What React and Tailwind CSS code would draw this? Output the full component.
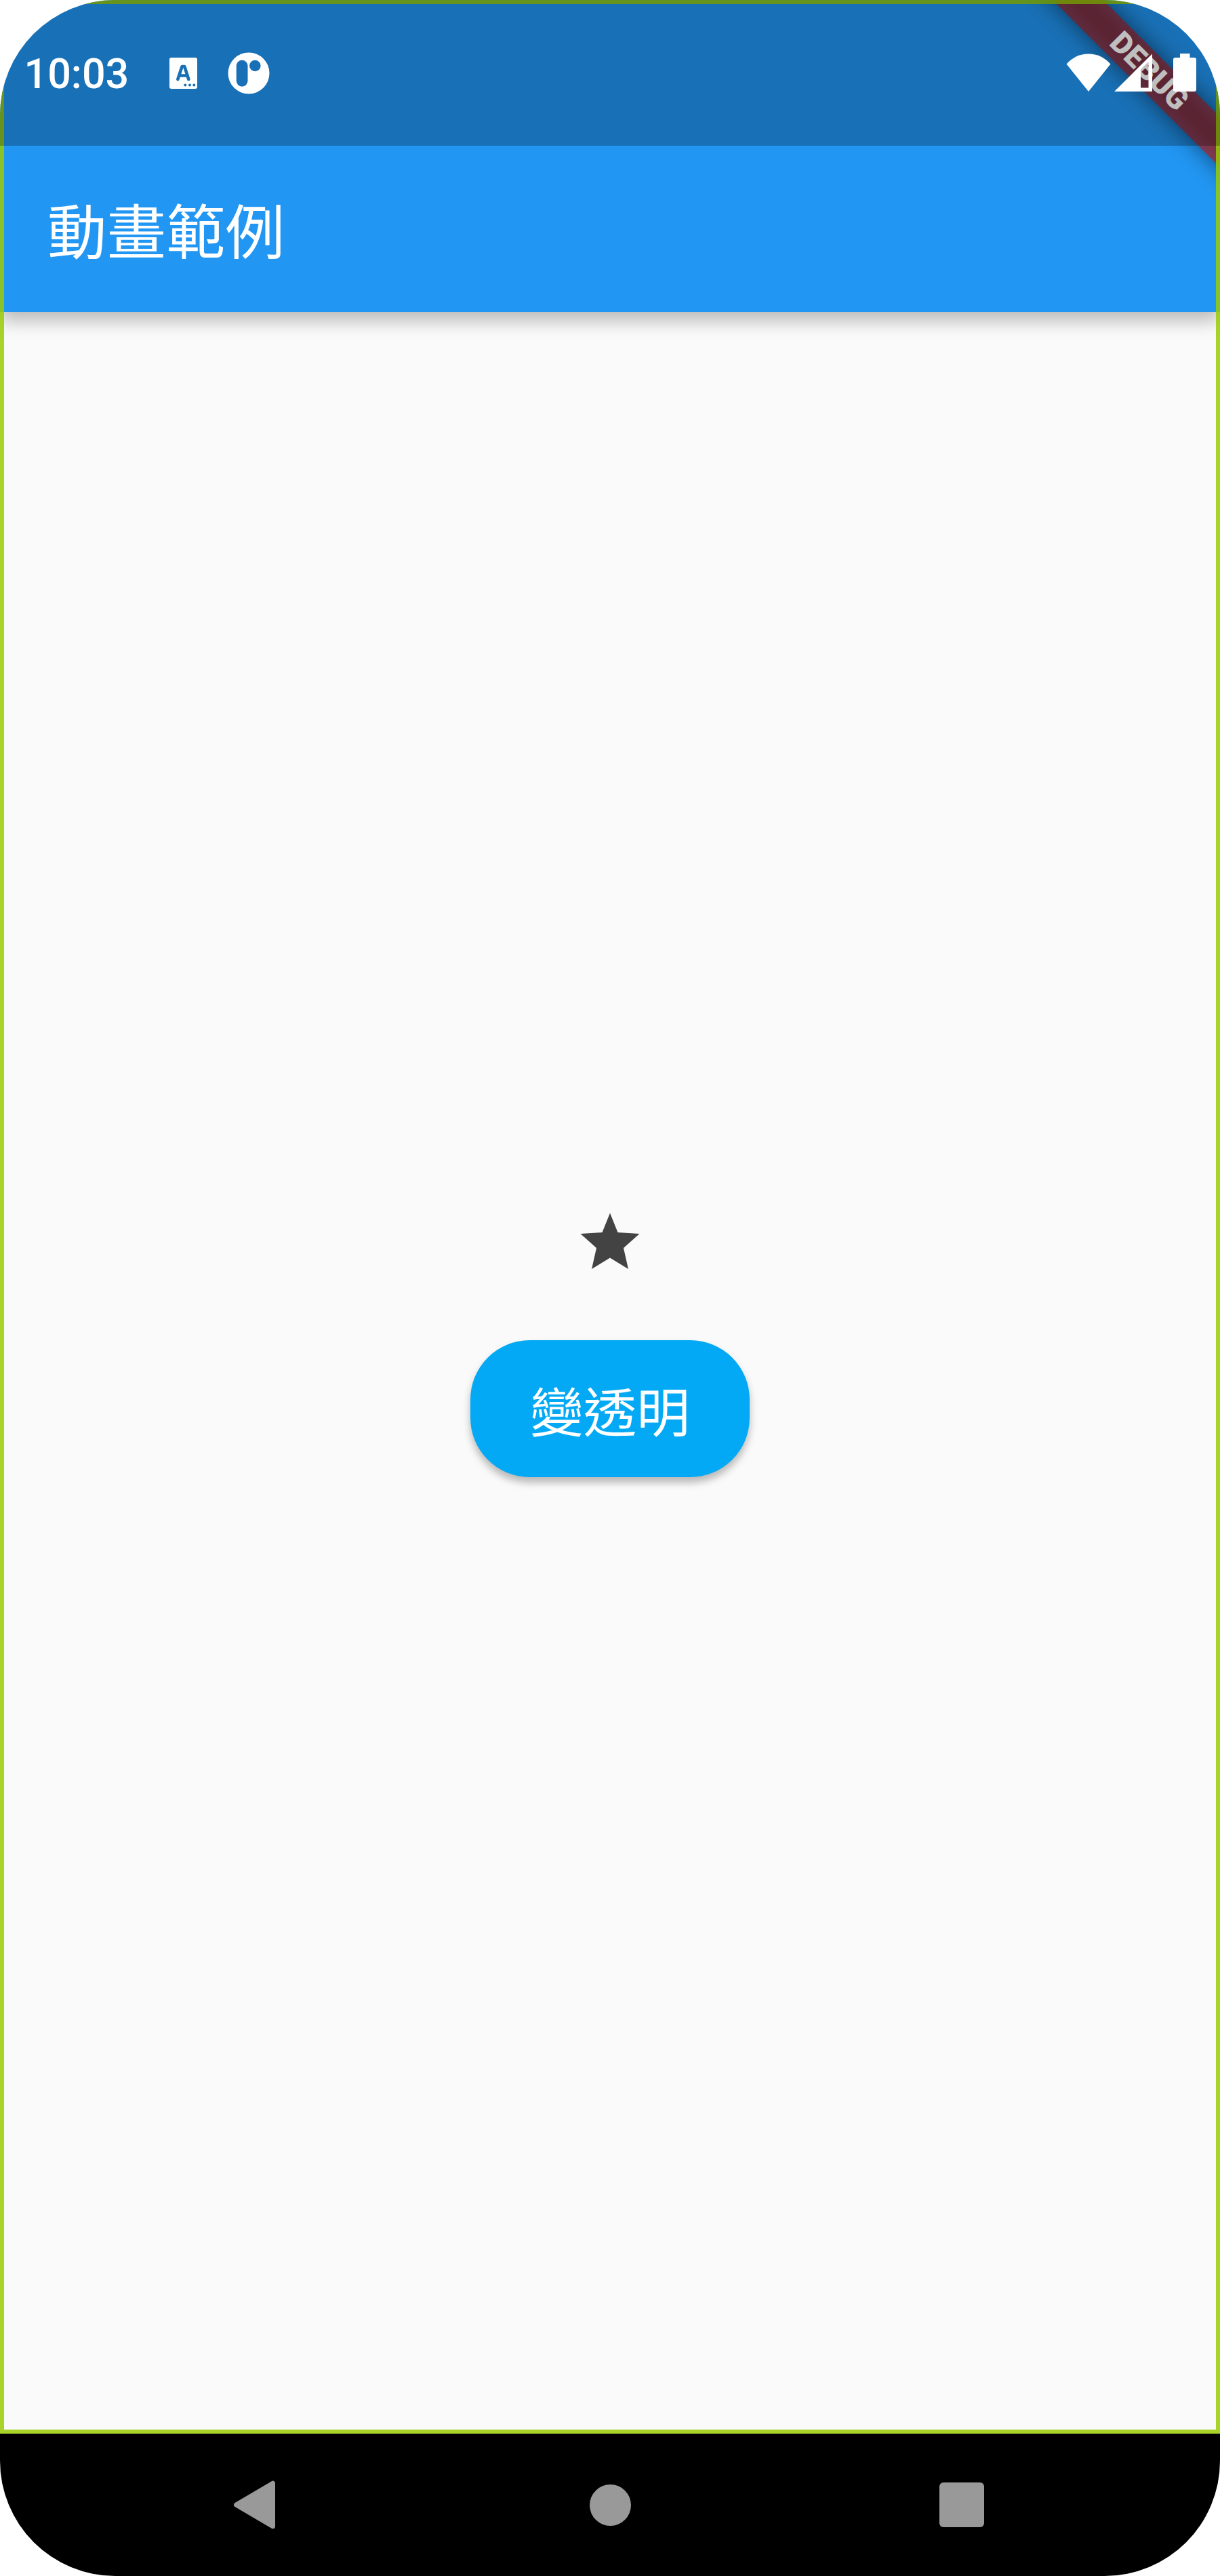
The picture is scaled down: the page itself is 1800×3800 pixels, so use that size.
function StatusBar() {
  return (
    <div className="relative z-20 flex h-[215px] items-center bg-black/25 text-white">
      <span className="mt-[3px] ml-[35.5px] w-[160.5px] font-['Roboto',sans-serif] text-[61px] leading-[72px] font-medium">10:03</span>
      <svg className="mt-[1px] ml-[54px]" width="41" height="46" viewBox="0 0 41 46">
        <rect width="41" height="46" rx="3" fill="#fff" />
        <path d="M12.3 32 L18.6 13 H22.2 L28.3 32 M15 26.5 H26" fill="none" stroke="#1970b6" strokeWidth="4.6" strokeLinejoin="round" strokeLinecap="round" />
        <g fill="#1970b6">
          <circle cx="23.3" cy="40.5" r="2" />
          <circle cx="30" cy="40.5" r="2" />
          <circle cx="36.3" cy="40.5" r="2" />
        </g>
      </svg>
      <svg className="mt-[1px] ml-[45px]" width="62" height="62" viewBox="0 0 62 62">
        <circle cx="31" cy="31" r="30.5" fill="#fff" />
        <rect x="12.7" y="11.7" width="16.8" height="39" rx="8.4" fill="#1970b6" />
        <circle cx="40.3" cy="20" r="8.3" fill="#1970b6" />
      </svg>
      <svg className="-mt-[2px] ml-auto" width="66" height="56" viewBox="0 0 66 56">
        <path d="M0.5 15.5 Q14 0.5 33 0.5 Q52 0.5 65.5 15.5 L33 56 Z" fill="#fff" />
      </svg>
      <svg className="-mt-[2px] ml-[5px]" width="56" height="56" viewBox="0 0 56 56">
        <path fillRule="evenodd" d="M0 56 L56 0.5 V56 Z M39 23.5 V50.5 H50.5 V12 Z" fill="#fff" />
      </svg>
      <svg className="-mt-[2px] mr-[35px] ml-[31px]" width="34" height="56" viewBox="0 0 34 56">
        <path d="M10 0 H24.5 V6 H31 Q34 6 34 9 V53 Q34 56 31 56 H3 Q0 56 0 53 V9 Q0 6 3 6 H10 Z" fill="#fff" />
      </svg>
    </div>
  );
}

function DebugBanner() {
  return (
    <div className="pointer-events-none absolute top-0 right-0 z-10 h-[300px] w-[320px] overflow-hidden">
      <div className="absolute top-[78.25px] right-[-244.5px] h-[52.5px] w-[700px] rotate-45 bg-black/50 blur-[17px]" />
      <div className="absolute top-[78.25px] right-[-244.5px] flex h-[52.5px] w-[700px] rotate-45 items-center justify-center bg-[#b71c1c]/63 pl-[2px] font-['Roboto',sans-serif] text-[44.4px] leading-none font-black text-white">
        DEBUG
      </div>
    </div>
  );
}

function NavigationBar() {
  return (
    <nav className="grid h-[210px] grid-cols-[750px_300px_750px] items-center bg-black">
      <svg className="ml-[344px]" width="64" height="72" viewBox="0 0 64 72">
        <path d="M4.5 36 L58.5 4.2 V67.8 Z" fill="#999" stroke="#999" strokeWidth="7" strokeLinejoin="round" />
      </svg>
      <div className="size-[61px] justify-self-center rounded-full bg-[#999]" />
      <div className="ml-[336px] size-[65.5px] rounded-[6px] bg-[#999]" />
    </nav>
  );
}

export default function App() {
  return (
    <div className="w-[1800px] bg-white">
      <div className="relative flex h-[3800px] flex-col overflow-hidden rounded-[170px] bg-[#fafafa]">
        <header className="relative bg-[#2196f3] shadow-[0_12px_26px_rgba(0,0,0,0.28)]">
          <StatusBar />
          <div className="flex h-[245px] items-center px-[70px] pb-[2px]">
            <h1 className="font-['Noto_Sans_CJK_TC',sans-serif] text-[87.5px] leading-none font-normal text-white">動畫範例</h1>
          </div>
        </header>
        <main className="flex flex-1 flex-col items-center pt-[1329px]">
          <svg width="88" height="84" viewBox="0 0 88 84">
            <polygon points="44,0.5 55.5,29 87.5,31 64,52 71,83 44,66.5 17,83 24,52 0.5,31 32.5,29" fill="#434343" />
          </svg>
          <button className="mt-[103.5px] h-[202px] w-[411.25px] rounded-[87.5px] bg-[#03a9f4] pt-[4px] font-['Noto_Sans_CJK_TC',sans-serif] text-[78.75px] leading-none font-normal text-white shadow-[0_8px_12px_rgba(0,0,0,0.27)]">
            變透明
          </button>
        </main>
        <NavigationBar />
        <DebugBanner />
        <div className="pointer-events-none absolute inset-x-0 top-0 z-10 h-[3590px] border-[6px] border-[#99cd05]/85" />
      </div>
    </div>
  );
}
